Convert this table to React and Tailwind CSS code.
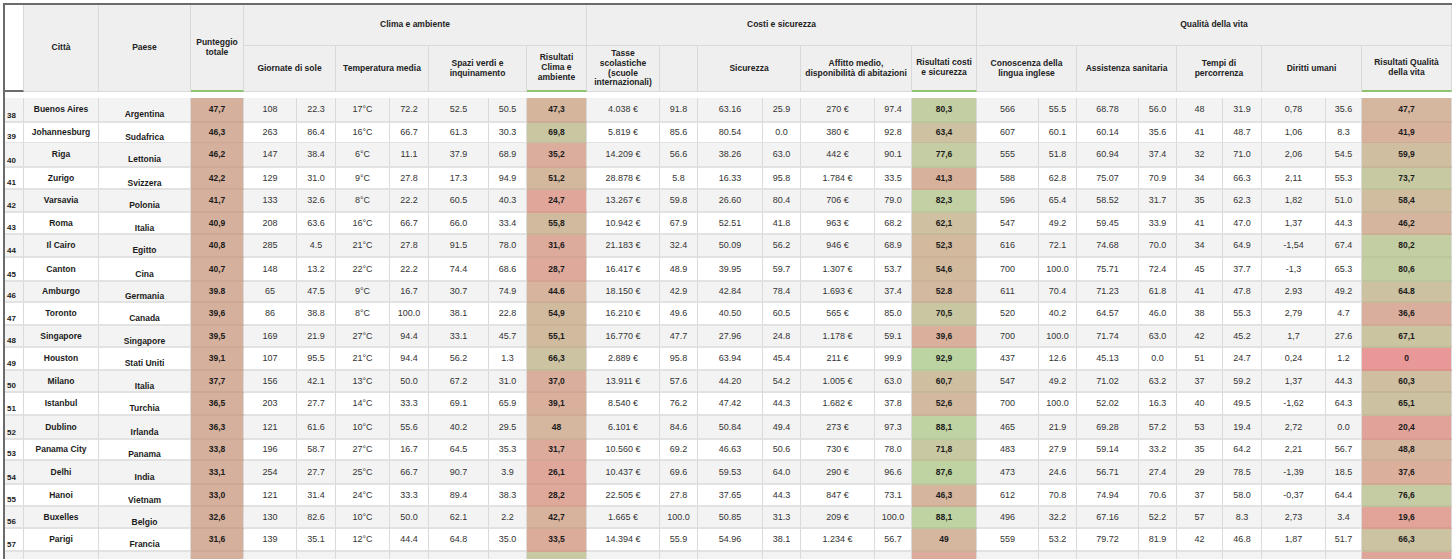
import React from 'react';

const COLS =
  'grid grid-cols-[19px_75px_92px_53px_53px_39px_54px_39px_60px_38px_60px_73px_38px_65px_38px_74px_37px_65px_62px_38px_62px_38px_46px_39px_64px_36px_90px]';

const rows = [
  { n: 38, h: 'h-[25px]', city: 'Buenos Aires', country: 'Argentina', score: '47,7', clima: ['108', '22.3', '17°C', '72.2', '52.5', '50.5'], rc: '47,3', costi: ['4.038 €', '91.8', '63.16', '25.9', '270 €', '97.4'], rk: '80,3', vita: ['566', '55.5', '68.78', '56.0', '48', '31.9', '0,78', '35.6'], rv: '47,7' },
  { n: 39, h: 'h-[20px]', city: 'Johannesburg', country: 'Sudafrica', score: '46,3', clima: ['263', '86.4', '16°C', '66.7', '61.3', '30.3'], rc: '69,8', costi: ['5.819 €', '85.6', '80.54', '0.0', '380 €', '92.8'], rk: '63,4', vita: ['607', '60.1', '60.14', '35.6', '41', '48.7', '1,06', '8.3'], rv: '41,9' },
  { n: 40, h: 'h-[25px]', city: 'Riga', country: 'Lettonia', score: '46,2', clima: ['147', '38.4', '6°C', '11.1', '37.9', '68.9'], rc: '35,2', costi: ['14.209 €', '56.6', '38.26', '63.0', '442 €', '90.1'], rk: '77,6', vita: ['555', '51.8', '60.94', '37.4', '32', '71.0', '2,06', '54.5'], rv: '59,9' },
  { n: 41, h: 'h-[22px]', city: 'Zurigo', country: 'Svizzera', score: '42,2', clima: ['129', '31.0', '9°C', '27.8', '17.3', '94.9'], rc: '51,2', costi: ['28.878 €', '5.8', '16.33', '95.8', '1.784 €', '33.5'], rk: '41,3', vita: ['588', '62.8', '75.07', '70.9', '34', '66.3', '2,11', '55.3'], rv: '73,7' },
  { n: 42, h: 'h-[23px]', city: 'Varsavia', country: 'Polonia', score: '41,7', clima: ['133', '32.6', '8°C', '22.2', '60.5', '40.3'], rc: '24,7', costi: ['13.267 €', '59.8', '26.60', '80.4', '706 €', '79.0'], rk: '82,3', vita: ['596', '65.4', '58.52', '31.7', '35', '62.3', '1,82', '51.0'], rv: '58,4' },
  { n: 43, h: 'h-[22px]', city: 'Roma', country: 'Italia', score: '40,9', clima: ['208', '63.6', '16°C', '66.7', '66.0', '33.4'], rc: '55,8', costi: ['10.942 €', '67.9', '52.51', '41.8', '963 €', '68.2'], rk: '62,1', vita: ['547', '49.2', '59.45', '33.9', '41', '47.0', '1,37', '44.3'], rv: '46,2' },
  { n: 44, h: 'h-[23px]', city: 'Il Cairo', country: 'Egitto', score: '40,8', clima: ['285', '4.5', '21°C', '27.8', '91.5', '78.0'], rc: '31,6', costi: ['21.183 €', '32.4', '50.09', '56.2', '946 €', '68.9'], rk: '52,3', vita: ['616', '72.1', '74.68', '70.0', '34', '64.9', '-1,54', '67.4'], rv: '80,2' },
  { n: 45, h: 'h-[24px]', city: 'Canton', country: 'Cina', score: '40,7', clima: ['148', '13.2', '22°C', '22.2', '74.4', '68.6'], rc: '28,7', costi: ['16.417 €', '48.9', '39.95', '59.7', '1.307 €', '53.7'], rk: '54,6', vita: ['700', '100.0', '75.71', '72.4', '45', '37.7', '-1,3', '65.3'], rv: '80,6' },
  { n: 46, h: 'h-[21px]', city: 'Amburgo', country: 'Germania', score: '39.8', clima: ['65', '47.5', '9°C', '16.7', '30.7', '74.9'], rc: '44.6', costi: ['18.150 €', '42.9', '42.84', '78.4', '1.693 €', '37.4'], rk: '52.8', vita: ['611', '70.4', '71.23', '61.8', '41', '47.8', '2.93', '49.2'], rv: '64.8' },
  { n: 47, h: 'h-[23px]', city: 'Toronto', country: 'Canada', score: '39,6', clima: ['86', '38.8', '8°C', '100.0', '38.1', '22.8'], rc: '54,9', costi: ['16.210 €', '49.6', '40.50', '60.5', '565 €', '85.0'], rk: '70,5', vita: ['520', '40.2', '64.57', '46.0', '38', '55.3', '2,79', '4.7'], rv: '36,6' },
  { n: 48, h: 'h-[22px]', city: 'Singapore', country: 'Singapore', score: '39,5', clima: ['169', '21.9', '27°C', '94.4', '33.1', '45.7'], rc: '55,1', costi: ['16.770 €', '47.7', '27.96', '24.8', '1.178 €', '59.1'], rk: '39,6', vita: ['700', '100.0', '71.74', '63.0', '42', '45.2', '1,7', '27.6'], rv: '67,1' },
  { n: 49, h: 'h-[23px]', city: 'Houston', country: 'Stati Uniti', score: '39,1', clima: ['107', '95.5', '21°C', '94.4', '56.2', '1.3'], rc: '66,3', costi: ['2.889 €', '95.8', '63.94', '45.4', '211 €', '99.9'], rk: '92,9', vita: ['437', '12.6', '45.13', '0.0', '51', '24.7', '0,24', '1.2'], rv: '0' },
  { n: 50, h: 'h-[22px]', city: 'Milano', country: 'Italia', score: '37,7', clima: ['156', '42.1', '13°C', '50.0', '67.2', '31.0'], rc: '37,0', costi: ['13.911 €', '57.6', '44.20', '54.2', '1.005 €', '63.0'], rk: '60,7', vita: ['547', '49.2', '71.02', '63.2', '37', '59.2', '1,37', '44.3'], rv: '60,3' },
  { n: 51, h: 'h-[23px]', city: 'Istanbul', country: 'Turchia', score: '36,5', clima: ['203', '27.7', '14°C', '33.3', '69.1', '65.9'], rc: '39,1', costi: ['8.540 €', '76.2', '47.42', '44.3', '1.682 €', '37.8'], rk: '52,6', vita: ['700', '100.0', '52.02', '16.3', '40', '49.5', '-1,62', '64.3'], rv: '65,1' },
  { n: 52, h: 'h-[24px]', city: 'Dublino', country: 'Irlanda', score: '36,3', clima: ['121', '61.6', '10°C', '55.6', '40.2', '29.5'], rc: '48', costi: ['6.101 €', '84.6', '50.84', '49.4', '273 €', '97.3'], rk: '88,1', vita: ['465', '21.9', '69.28', '57.2', '53', '19.4', '2,72', '0.0'], rv: '20,4' },
  { n: 53, h: 'h-[21px]', city: 'Panama City', country: 'Panama', score: '33,8', clima: ['196', '58.7', '27°C', '16.7', '64.5', '35.3'], rc: '31,7', costi: ['10.560 €', '69.2', '46.63', '50.6', '730 €', '78.0'], rk: '71,8', vita: ['483', '27.9', '59.14', '33.2', '35', '64.2', '2,21', '56.7'], rv: '48,8' },
  { n: 54, h: 'h-[24px]', city: 'Delhi', country: 'India', score: '33,1', clima: ['254', '27.7', '25°C', '66.7', '90.7', '3.9'], rc: '26,1', costi: ['10.437 €', '69.6', '59.53', '64.0', '290 €', '96.6'], rk: '87,6', vita: ['473', '24.6', '56.71', '27.4', '29', '78.5', '-1,39', '18.5'], rv: '37,6' },
  { n: 55, h: 'h-[22px]', city: 'Hanoi', country: 'Vietnam', score: '33,0', clima: ['121', '31.4', '24°C', '33.3', '89.4', '38.3'], rc: '28,2', costi: ['22.505 €', '27.8', '37.65', '44.3', '847 €', '73.1'], rk: '46,3', vita: ['612', '70.8', '74.94', '70.6', '37', '58.0', '-0,37', '64.4'], rv: '76,6' },
  { n: 56, h: 'h-[22px]', city: 'Buxelles', country: 'Belgio', score: '32,6', clima: ['130', '82.6', '10°C', '50.0', '62.1', '2.2'], rc: '42,7', costi: ['1.665 €', '100.0', '50.85', '31.3', '209 €', '100.0'], rk: '88,1', vita: ['496', '32.2', '67.16', '52.2', '57', '8.3', '2,73', '3.4'], rv: '19,6' },
  { n: 57, h: 'h-[23px]', city: 'Parigi', country: 'Francia', score: '31,6', clima: ['139', '35.1', '12°C', '44.4', '64.8', '35.0'], rc: '33,5', costi: ['14.394 €', '55.9', '54.96', '38.1', '1.234 €', '56.7'], rk: '49', vita: ['559', '53.2', '79.72', '81.9', '42', '46.8', '1,87', '51.7'], rv: '66,3' },
  // ultima riga, tagliata dal bordo della finestra
  { n: '', h: 'h-[23px]', city: '', country: '', score: '', clima: ['', '', '', '', '', ''], rc: '', rcTint: 74, costi: ['', '', '', '', '', ''], rk: '', rkTint: 32, vita: ['', '', '', '', '', '', '', ''], rv: '', rvTint: 24 },
];

const stops = [
  [0, [232, 152, 150]],
  [25, [224, 166, 154]],
  [45, [214, 180, 157]],
  [60, [207, 190, 160]],
  [70, [201, 198, 162]],
  [80, [195, 207, 163]],
  [100, [184, 214, 160]],
];

function tint(value) {
  const x = typeof value === 'number' ? value : parseFloat(String(value).replace(',', '.'));
  for (let i = 1; i < stops.length; i++) {
    const [v0, c0] = stops[i - 1];
    const [v1, c1] = stops[i];
    if (x <= v1) {
      const t = (x - v0) / (v1 - v0);
      return `rgb(${c0.map((c, k) => Math.round(c + (c1[k] - c) * t)).join(',')})`;
    }
  }
  return `rgb(${stops[stops.length - 1][1].join(',')})`;
}

const Head = ({ children, green, className = '' }) => (
  <div
    className={`flex items-center justify-center text-center bg-[#efefef] border-r border-r-[#d9d9d9] ${
      green ? 'border-b-2 border-b-[#8fc46f]' : 'border-b border-b-[#d9d9d9]'
    } ${className}`}
  >
    <span className="leading-[9.8px]">{children}</span>
  </div>
);

const Header = () => (
  <div className={`${COLS} grid-rows-[41px_46px] font-bold text-[8.5px] text-[#222]`}>
    <div className="row-span-2 bg-white border-r border-r-[#d9d9d9] border-b-2 border-b-[#6b6b6b]" />
    <Head className="row-span-2">Città</Head>
    <Head className="row-span-2">Paese</Head>
    <Head className="row-span-2" green>
      Punteggio
      <br />
      totale
    </Head>
    <Head className="col-span-7">Clima e ambiente</Head>
    <Head className="col-span-7">Costi e sicurezza</Head>
    <Head className="col-span-9">Qualità della vita</Head>

    <Head className="col-span-2">Giornate di sole</Head>
    <Head className="col-span-2">Temperatura media</Head>
    <Head className="col-span-2">
      Spazi verdi e
      <br />
      inquinamento
    </Head>
    <Head green>
      Risultati
      <br />
      Clima e
      <br />
      ambiente
    </Head>
    <Head>
      Tasse
      <br />
      scolastiche
      <br />
      (scuole
      <br />
      internazionali)
    </Head>
    <Head />
    <Head className="col-span-2">Sicurezza</Head>
    <Head className="col-span-2">
      Affitto medio,
      <br />
      disponibilità di abitazioni
    </Head>
    <Head green>
      Risultati costi
      <br />e sicurezza
    </Head>
    <Head className="col-span-2">
      Conoscenza della
      <br />
      lingua inglese
    </Head>
    <Head className="col-span-2">Assistenza sanitaria</Head>
    <Head className="col-span-2">
      Tempi di
      <br />
      percorrenza
    </Head>
    <Head className="col-span-2">Diritti umani</Head>
    <Head green>
      Risultati Qualità
      <br />
      della vita
    </Head>
  </div>
);

function Row({ r }) {
  const even = typeof r.n === 'number' ? r.n % 2 === 0 : true;
  const bg = even ? 'bg-[#f3f3f3]' : 'bg-white';
  const plain = `border-r border-r-[#dadada] border-b-2 border-b-[#e2e2e2] ${bg}`;
  const tinted = 'border-r border-r-[#dadada] border-b-2 border-b-[#0000000a]';
  const num = `flex items-center justify-center leading-none text-[9px] text-[#333] ${plain}`;
  const res = `flex items-center justify-center leading-none font-bold text-[8.5px] text-[#1b1b1b] ${tinted}`;

  return (
    <div className={`${COLS} ${r.h}`}>
      <div className={`flex items-end pl-[2px] pb-[1px] leading-none font-bold text-[8px] text-[#222] ${plain}`}>{r.n}</div>
      <div className={`flex items-center justify-center leading-none font-bold text-[8.5px] text-[#1b1b1b] ${plain}`}>{r.city}</div>
      <div className={`flex items-center justify-center pt-[10px] leading-none font-bold text-[8.5px] text-[#1b1b1b] ${plain}`}>{r.country}</div>
      <div className={`${res} bg-[#d5b09c]`}>{r.score}</div>
      {r.clima.map((v, i) => (
        <div key={`c${i}`} className={num}>{v}</div>
      ))}
      <div className={res} style={{ backgroundColor: tint(r.rcTint ?? r.rc) }}>{r.rc}</div>
      {r.costi.map((v, i) => (
        <div key={`k${i}`} className={num}>{v}</div>
      ))}
      <div className={res} style={{ backgroundColor: tint(r.rkTint ?? r.rk) }}>{r.rk}</div>
      {r.vita.map((v, i) => (
        <div key={`v${i}`} className={num}>{v}</div>
      ))}
      <div className={res} style={{ backgroundColor: tint(r.rvTint ?? r.rv) }}>{r.rv}</div>
    </div>
  );
}

export default function App() {
  return (
    <div className="w-[1452px] h-[559px] overflow-hidden bg-white pt-[3px] pl-[3px] font-['Liberation_Sans',Arial,sans-serif]">
      <div className="border-t-2 border-l-2 border-[#6b6b6b]">
        <Header />
        <div className="h-[6px] bg-white" />
        {rows.map((r, i) => (
          <Row key={i} r={r} />
        ))}
      </div>
    </div>
  );
}
